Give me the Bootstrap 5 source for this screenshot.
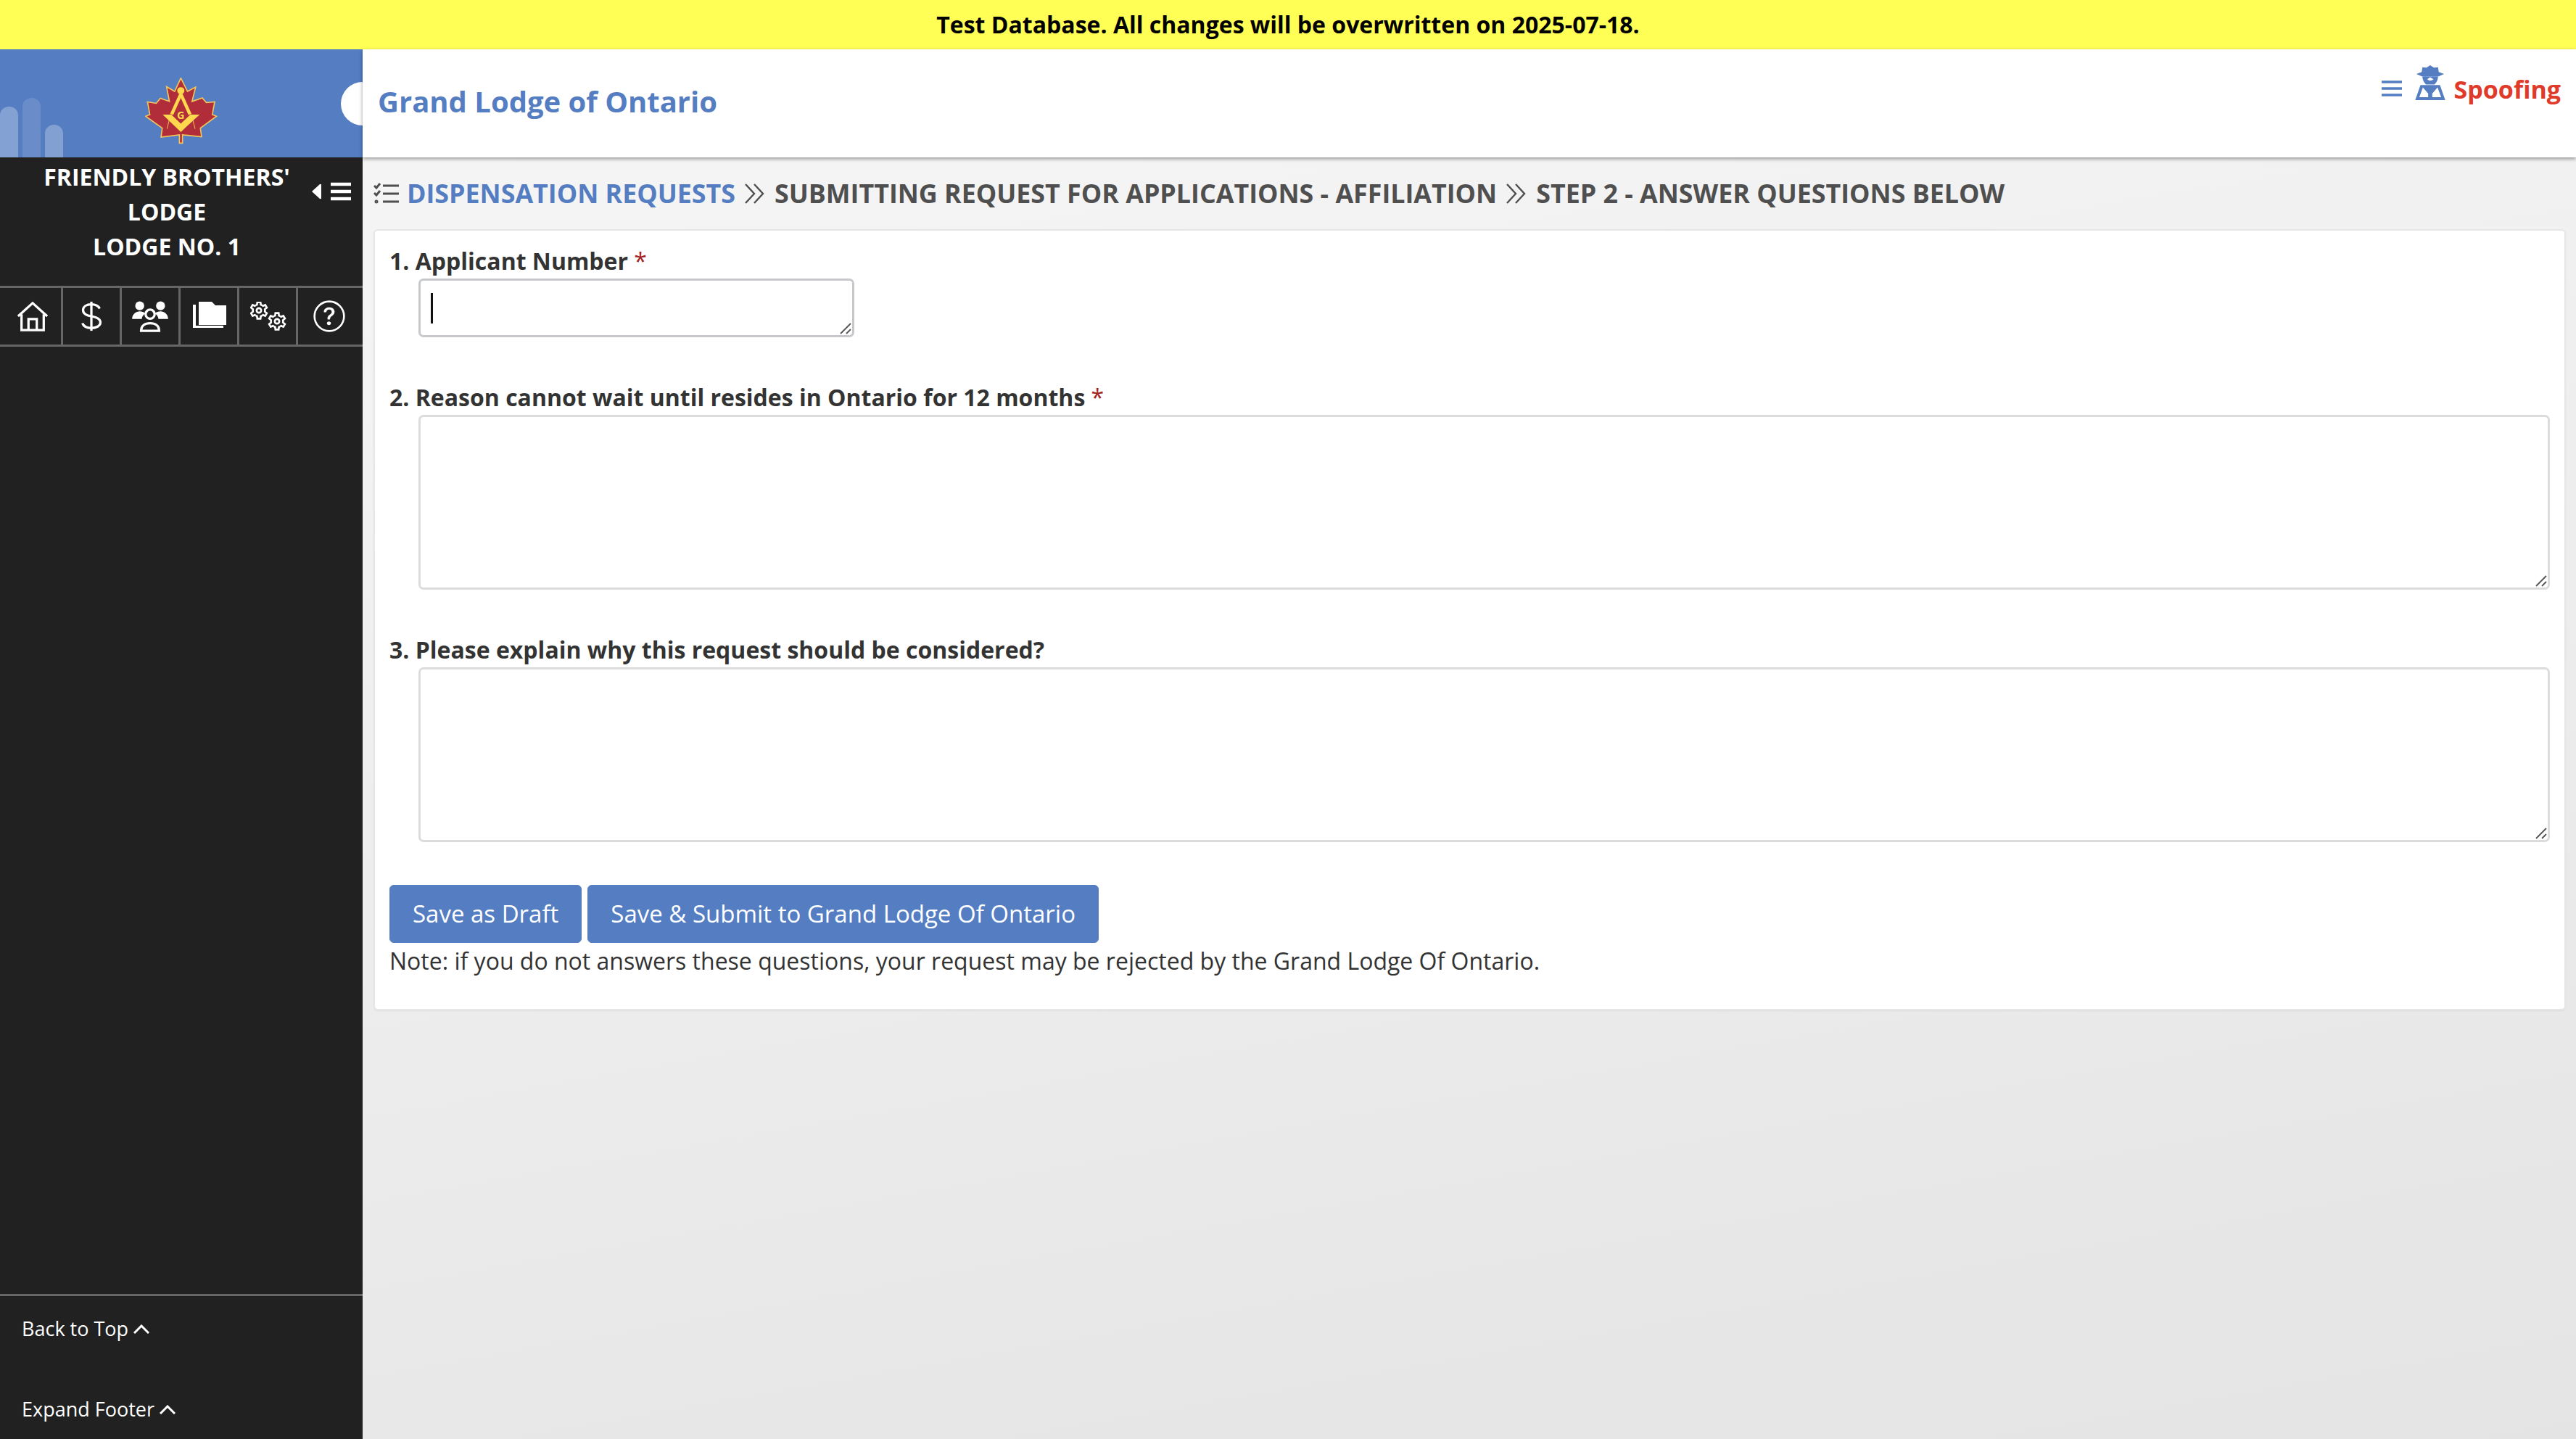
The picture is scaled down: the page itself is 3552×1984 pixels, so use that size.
<!DOCTYPE html>
<html lang="en">
<head>
<meta charset="utf-8">
<title>Dispensation Requests</title>
<link href="https://cdn.jsdelivr.net/npm/bootstrap@5.3.0/dist/css/bootstrap.min.css" rel="stylesheet">
<style>
html,body{height:100%}
body{font-family:"Open Sans","Noto Sans",sans-serif;font-size:32px;color:#333;overflow:hidden;background:#fff}
.test-bar{height:68px;background:#ffff55;color:#000;font-weight:700;font-size:32px}
.shell{height:calc(100vh - 68px)}
.side{width:500px;background:#212121;color:#fff}
.brand-box{height:149px;background:#547dc2;position:relative;overflow:hidden}
.brand-bar{position:absolute;bottom:0;width:25px;border-radius:12px 12px 0 0}
.bar-a{left:0;height:70px;background:rgba(255,255,255,.28)}
.bar-b{left:31px;height:82px;background:rgba(255,255,255,.13)}
.bar-c{left:62px;height:45px;background:rgba(255,255,255,.27)}
.side-notch{position:absolute;left:470px;top:45px;width:60px;height:60px;border-radius:50%;background:#fff}
.logo-mark{width:100px;height:92px;margin-top:20px}
.lodge-row{height:177px;padding-top:3px;position:relative}
.lodge-name{width:400px;margin-left:30px;font-weight:700;line-height:48px;text-align:center}
.collapse-btn{position:absolute;left:430px;top:34px;width:54px;height:26px}
.icon-row{height:84px;border-top:3px solid #666;border-bottom:3px solid #666}
.icon-cell{width:81px;border-right:3px solid #666}
.icon-cell:first-child{width:87px}
.icon-cell:last-child{border-right:0;flex-grow:1}
.ico-std{width:44px;height:44px}
.ico-home{margin-left:5px}
.ico-help{margin-right:4px}
.ico-team{width:50px;height:44px}
.ico-files{width:46px;height:36px;margin:-4px 0 0 2px}
.ico-gears{width:50px;height:40px;margin-left:2px}
.side-foot{border-top:3px solid #666;height:200px;padding:0 0 0 30px;font-size:27px}
.foot-link{color:#fff;gap:7px;height:60px}
.foot-link:first-child{height:90px;margin-bottom:36px}
.foot-link svg{width:22px;height:13px}
.work{background:linear-gradient(170deg,#f6f6f6 0%,#e4e4e4 100%)}
.top-head{height:149px;background:#fff;box-shadow:0 2px 5px rgba(0,0,0,.4);padding:0 21px;position:relative}
.org-title{color:#547dc2;font-weight:700;font-size:40px;margin-top:-6px}
.spoof-link{color:#e03a2a;font-weight:700;font-size:34px;margin-top:22px;gap:12px}
.ham-ico{margin-top:20px}
.spy-ico{margin-left:6px}
.page-trail{height:99px;padding:0 15px;font-weight:700;font-size:35.8px;color:#4f4f4f;text-transform:uppercase;gap:10px}
.trail-here{color:#547dc2}
.form-box{margin:0 14px 0 15px;height:1077px;background:#fff;border:2px solid #e6e6e6;border-radius:6px;padding:20px 20px 0 20px;box-shadow:0 1px 2px rgba(0,0,0,.06)}
.q-label{font-weight:700;line-height:44px;margin:0 0 2px;display:block;color:#333}
.req{color:#a3241f;font-weight:400}
.field-wrap{position:relative;margin-left:40px}
.q-input{display:block;width:100%;border:3px solid #dcdcdc;border-radius:7px;background:#fff;outline:0;font-size:32px;resize:none}
.q-short{height:81px;border-color:#c6c8cc}
.wrap-short{width:601px}
.q-long{height:241px}
.fake-caret{position:absolute;left:17px;top:20px;width:3px;height:42px;background:#111}
.grip-mark{position:absolute;right:4px;bottom:4px;width:16px;height:16px}
.gap-b{height:61px}
.draft-btn{background:#547dc2;border-color:#547dc2;color:#fff;font-size:33px;font-weight:500;height:80px;padding:0 31px;border-radius:6px}
.draft-btn:hover{background:#547dc2;color:#fff}
.btn-row{gap:8px;margin-top:59px}
.note-line{margin:1px 0 0;line-height:48px;color:#333}
</style>
</head>
<body class="d-flex flex-column">
<div class="test-bar d-flex align-items-center justify-content-center">Test Database. All changes will be overwritten on 2025-07-18.</div>
<div class="shell d-flex">
  <aside class="side d-flex flex-column flex-shrink-0">
    <div class="brand-box d-flex align-items-center justify-content-center">
      <span class="brand-bar bar-a"></span><span class="brand-bar bar-b"></span><span class="brand-bar bar-c"></span>
      <svg class="logo-mark" viewBox="60 50 300 280" aria-label="Grand Lodge crest">
        <path d="M208 52L236 108 270 90 255 150 298 135 315 155 350 152 340 205 358 212 290 262 295 298 215 290 215 325 202 325 202 290 125 300 130 262 60 212 78 205 68 152 105 158 122 137 160 150 148 88 182 108Z" fill="#b22d3a" stroke="#f2c65a" stroke-width="5"/>
        <path d="M165 205L150 265M252 205L268 265" stroke="#f2c65a" stroke-width="3" fill="none"/>
        <path d="M201 118h14l38 84-13 5-32-72-32 72-13-5z" fill="#ffd84d"/>
        <path d="M132 205h36l40 38 40-38h39l-79 73z" fill="#ffd84d"/>
        <circle cx="208" cy="105" r="15" fill="#ffd84d"/>
        <text x="208" y="225" font-family="Open Sans" font-weight="700" font-size="44" fill="#ffd84d" text-anchor="middle">G</text>
      </svg>
      <span class="side-notch"></span>
    </div>
    <div class="lodge-row">
      <div class="lodge-name">FRIENDLY BROTHERS' LODGE<br>LODGE NO. 1</div>
      <svg class="collapse-btn" viewBox="0 0 54 26" aria-hidden="true">
        <path d="M0 13L11 3q2-1 2 1v18q0 2-2 1z" fill="#fff"/>
        <path d="M26 3h28M26 13h28M26 23h28" stroke="#fff" stroke-width="4.5"/>
      </svg>
    </div>
    <div class="icon-row d-flex">
      <a class="icon-cell d-flex align-items-center justify-content-center" href="#" aria-label="Home">
        <svg class="ico-std ico-home" viewBox="0 0 46 46" fill="none" stroke="#fff" stroke-width="3.4"><path d="M2 23L23 4l21 19"/><path d="M7 20v23h32V20"/><path d="M17 43V27h12v16"/></svg>
      </a>
      <a class="icon-cell d-flex align-items-center justify-content-center" href="#" aria-label="Finance">
        <svg class="ico-std" viewBox="0 0 46 46" fill="none" stroke="#fff" stroke-width="3.4"><path d="M23 2v42"/><path d="M35 12c-2-4-7-6-12-6-7 0-12 3-12 8 0 6 6 8 12 9s13 3 13 9c0 5-6 8-13 8-6 0-11-2-13-7"/></svg>
      </a>
      <a class="icon-cell d-flex align-items-center justify-content-center" href="#" aria-label="Members">
        <svg class="ico-team" viewBox="0 0 52 46" fill="#fff"><circle cx="11" cy="8" r="6.5"/><circle cx="41" cy="8" r="6.5"/><path d="M0 27c0-7 6-11 11-11 3 0 6 1 8 3-3 2-5 5-5 8zM52 27c0-7-6-11-11-11-3 0-6 1-8 3 3 2 5 5 5 8z"/><circle cx="26" cy="20" r="6.5" fill="none" stroke="#fff" stroke-width="3.4"/><path d="M13 44c0-8 6-11 13-11s13 3 13 11z" fill="none" stroke="#fff" stroke-width="3.4"/></svg>
      </a>
      <a class="icon-cell d-flex align-items-center justify-content-center" href="#" aria-label="Files">
        <svg class="ico-files" viewBox="0 0 46 36" fill="#fff"><path d="M8 0h18l5 5h15v27H8z"/><path d="M0 4h4v29h38v3H0z"/></svg>
      </a>
      <a class="icon-cell d-flex align-items-center justify-content-center" href="#" aria-label="Settings">
        <svg class="ico-gears" viewBox="0 0 50 40" fill="none" stroke="#fff" stroke-width="2.5">
          <defs><polyline id="tooth" points="-4,-6.9 -2.5,-7.6 -2.1,-10.8 2.1,-10.8 2.5,-7.6 4,-6.9"/></defs>
          <g transform="translate(12,12) scale(1.05)"><use href="#tooth"/><use href="#tooth" transform="rotate(60)"/><use href="#tooth" transform="rotate(120)"/><use href="#tooth" transform="rotate(180)"/><use href="#tooth" transform="rotate(240)"/><use href="#tooth" transform="rotate(300)"/><circle r="3"/></g>
          <g transform="translate(37,27) scale(1.05)"><use href="#tooth"/><use href="#tooth" transform="rotate(60)"/><use href="#tooth" transform="rotate(120)"/><use href="#tooth" transform="rotate(180)"/><use href="#tooth" transform="rotate(240)"/><use href="#tooth" transform="rotate(300)"/><circle r="3"/></g>
        </svg>
      </a>
      <a class="icon-cell d-flex align-items-center justify-content-center" href="#" aria-label="Help">
        <svg class="ico-std ico-help" viewBox="0 0 16 16"><circle cx="8" cy="8" r="7.4" fill="none" stroke="#fff" stroke-width=".95"/><path fill="#fff" d="M5.255 5.786a.237.237 0 0 0 .241.247h.825c.138 0 .248-.113.266-.25.09-.656.54-1.134 1.342-1.134.686 0 1.314.343 1.314 1.168 0 .635-.374.927-.965 1.371-.673.489-1.206 1.06-1.168 1.987l.003.217a.25.25 0 0 0 .25.246h.811a.25.25 0 0 0 .25-.25v-.105c0-.718.273-.927 1.01-1.486.609-.463 1.244-.977 1.244-2.056 0-1.511-1.276-2.241-2.673-2.241-1.267 0-2.655.59-2.75 2.286zm1.557 5.763c0 .533.425.927 1.01.927.609 0 1.028-.394 1.028-.927 0-.552-.42-.94-1.029-.94-.584 0-1.009.388-1.009.94z"/></svg>
      </a>
    </div>
    <div class="flex-grow-1"></div>
    <div class="side-foot">
      <div class="foot-link d-flex align-items-center">Back to Top <svg viewBox="0 0 22 13" fill="none" stroke="#fff" stroke-width="3"><path d="M1 12L11 2l10 10"/></svg></div>
      <div class="foot-link d-flex align-items-center">Expand Footer <svg viewBox="0 0 22 13" fill="none" stroke="#fff" stroke-width="3"><path d="M1 12L11 2l10 10"/></svg></div>
    </div>
  </aside>
  <main class="work flex-grow-1 d-flex flex-column">
    <header class="top-head d-flex justify-content-between">
      <div class="org-title d-flex align-items-center">Grand Lodge of Ontario</div>
      <div class="spoof-link d-flex align-items-start">
        <svg class="ham-ico" width="28" height="24" viewBox="0 0 28 24" fill="none" stroke="#547dc2" stroke-width="3.6" aria-hidden="true"><path d="M0 3h28M0 12h28M0 21h28"/></svg>
        <svg class="spy-ico" width="42" height="48" viewBox="0 0 125 145" aria-label="Spy">
          <path fill="#547dc2" d="M62 0L78 10 95 8 98 28 120 36 98 46H27L5 36 27 28 30 8 47 10Z"/>
          <path fill="#547dc2" d="M30 46H95C95 62 88 72 80 80H45C37 72 30 62 30 46Z"/>
          <path fill="#fff" d="M50 58L62 50 76 58Q62 70 50 58Z"/>
          <path fill="#547dc2" d="M22 82H103L125 145H0Z"/>
          <path fill="#fff" d="M32 92L54 118V133H17ZM93 92L71 118V133H108Z"/>
        </svg>
        <span class="lh-1 mt-3">Spoofing</span>
      </div>
    </header>
    <nav class="page-trail d-flex align-items-center" aria-label="Trail">
      <svg width="36" height="30" viewBox="0 0 36 30" fill="none" stroke="#4f4f4f" stroke-width="3" aria-hidden="true"><path d="M1 4l3 3 5-6M1 14l3 3 5-6"/><path d="M13 4h22M13 15h22M13 26h22"/><circle cx="4" cy="26" r="1"/></svg>
      <span class="trail-here">Dispensation Requests</span>
      <svg width="34" height="28" viewBox="0 0 30 28" fill="none" stroke="#4f4f4f" stroke-width="2.4" aria-hidden="true"><path d="M2 1l12 13L2 27M14 1l12 13-12 13"/></svg>
      <span>Submitting Request for Applications - Affiliation</span>
      <svg width="34" height="28" viewBox="0 0 30 28" fill="none" stroke="#4f4f4f" stroke-width="2.4" aria-hidden="true"><path d="M2 1l12 13L2 27M14 1l12 13-12 13"/></svg>
      <span>Step 2 - Answer Questions Below</span>
    </nav>
    <form class="form-box" onsubmit="return false">
      <label class="q-label" for="q1">1. Applicant Number <span class="req">*</span></label>
      <div class="field-wrap wrap-short"><textarea id="q1" class="q-input q-short"></textarea><span class="fake-caret"></span>
        <svg class="grip-mark" viewBox="0 0 16 16" fill="none" stroke="#555" stroke-width="1.8" aria-hidden="true"><path d="M1 15L15 1M9 15l6-6"/></svg></div>
      <div class="gap-b"></div>
      <label class="q-label" for="q2">2. Reason cannot wait until resides in Ontario for 12 months <span class="req">*</span></label>
      <div class="field-wrap"><textarea id="q2" class="q-input q-long"></textarea>
        <svg class="grip-mark" viewBox="0 0 16 16" fill="none" stroke="#555" stroke-width="1.8" aria-hidden="true"><path d="M1 15L15 1M9 15l6-6"/></svg></div>
      <div class="gap-b"></div>
      <label class="q-label" for="q3">3. Please explain why this request should be considered?</label>
      <div class="field-wrap"><textarea id="q3" class="q-input q-long"></textarea>
        <svg class="grip-mark" viewBox="0 0 16 16" fill="none" stroke="#555" stroke-width="1.8" aria-hidden="true"><path d="M1 15L15 1M9 15l6-6"/></svg></div>
      <div class="btn-row d-flex">
        <button class="btn draft-btn" type="button">Save as Draft</button>
        <button class="btn draft-btn" type="button">Save &amp; Submit to Grand Lodge Of Ontario</button>
      </div>
      <p class="note-line">Note: if you do not answers these questions, your request may be rejected by the Grand Lodge Of Ontario.</p>
    </form>
  </main>
</div>
<script src="https://cdn.jsdelivr.net/npm/bootstrap@5.3.0/dist/js/bootstrap.bundle.min.js"></script>
</body>
</html>
